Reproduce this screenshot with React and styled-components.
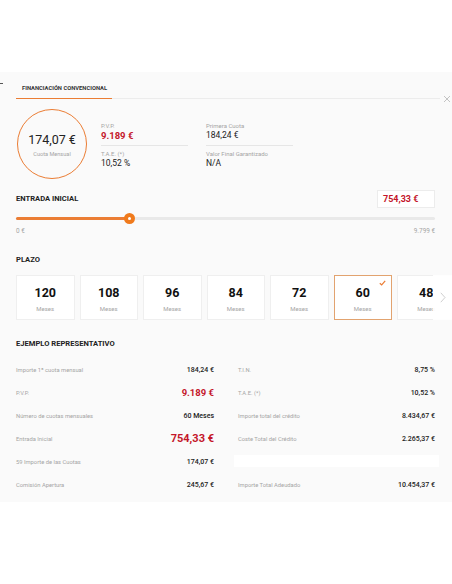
import React from "react";
import styled, { createGlobalStyle } from "styled-components";

const GlobalStyle = createGlobalStyle`
  * { box-sizing: border-box; }
  body {
    margin: 0;
    background: #ffffff;
    font-family: "Roboto", "Liberation Sans", sans-serif;
    color: #222;
  }
`;

const ORANGE = "#eb7d34";
const RED = "#c4162a";
const GREY = "#a5a5a5";

const Page = styled.div`
  width: 452px;
  height: 584px;
  padding-top: 72px;
  position: relative;
`;

const Dash = styled.span`
  position: absolute;
  left: 0;
  top: 83px;
  width: 3px;
  height: 1px;
  background: #555;
`;

const Panel = styled.div`
  background: #fafafa;
  padding: 0 17px 6px 16px;
  overflow: hidden;
`;

const TabBar = styled.div`
  display: flex;
  align-items: flex-end;
  height: 27px;
  border-bottom: 1px solid #ececec;
  margin-right: -5px;
  position: relative;
`;

const Tab = styled.div`
  height: 100%;
  display: flex;
  align-items: center;
  padding: 4px 5px 0 6px;
  font-size: 5.8px;
  font-weight: 700;
  color: #333;
  border-bottom: 1.5px solid ${ORANGE};
  margin-bottom: -1px;
`;

const Close = styled.button`
  position: absolute;
  right: -12px;
  bottom: -6px;
  width: 10px;
  height: 10px;
  padding: 0;
  border: none;
  background: none;
  display: flex;
  align-items: center;
  justify-content: center;
`;

const Summary = styled.div`
  display: flex;
  align-items: flex-start;
  margin-top: 10px;
`;

const Circle = styled.div`
  width: 70px;
  height: 70px;
  margin-left: 1px;
  border-radius: 50%;
  border: 1.8px solid ${ORANGE};
  display: flex;
  flex-direction: column;
  align-items: center;
  justify-content: center;
  flex-shrink: 0;
`;

const CircleValue = styled.div`
  font-size: 12.5px;
  color: #222;
  line-height: 14px;
  margin-top: 2px;
`;

const CircleLabel = styled.div`
  font-size: 5.6px;
  color: ${GREY};
  margin-top: 4px;
`;

const InfoGrid = styled.div`
  display: flex;
  gap: 18px;
  margin-left: 14px;
  padding-top: 13px;
`;

const InfoCol = styled.div`
  width: 87px;
  display: flex;
  flex-direction: column;
`;

const InfoItem = styled.div`
  padding: ${(p) => (p.$first ? "0 0 4px" : "4px 0 0")};
  border-bottom: ${(p) => (p.$first ? "1px solid #e6e6e6" : "none")};
`;

const InfoLabel = styled.div`
  font-size: 6px;
  line-height: 8px;
  color: ${GREY};
`;

const InfoValue = styled.div`
  font-size: ${(p) => (p.$accent ? "9.5px" : "8.5px")};
  font-weight: ${(p) => (p.$accent ? 700 : 400)};
  color: ${(p) => (p.$accent ? RED : "#222")};
  line-height: 11px;
`;

const SectionHead = styled.div`
  display: flex;
  align-items: center;
  justify-content: space-between;
  margin-top: ${(p) => p.$mt || 0}px;
`;

const Title = styled.div`
  font-size: 7.6px;
  font-weight: 700;
  color: #222;
  line-height: 8px;
`;

const AmountBox = styled.div`
  width: 58px;
  height: 18px;
  border: 1px solid #ececec;
  background: #fff;
  padding: 0 5px;
  display: flex;
  align-items: center;
  font-size: 9px;
  font-weight: 700;
  color: ${RED};
`;

const Slider = styled.div`
  position: relative;
  height: 10px;
  margin-top: 5px;
  display: flex;
  align-items: center;
`;

const Track = styled.div`
  width: 100%;
  height: 3px;
  border-radius: 2px;
  background: #e9e9e9;
  position: relative;
`;

const Fill = styled.div`
  position: absolute;
  left: 0;
  top: 0;
  height: 100%;
  border-radius: 2px;
  background: ${ORANGE};
`;

const Thumb = styled.div`
  position: absolute;
  top: 50%;
  width: 11px;
  height: 11px;
  margin: -5.5px 0 0 -5.5px;
  border-radius: 50%;
  background: #f07a1c;
  display: flex;
  align-items: center;
  justify-content: center;

  &::after {
    content: "";
    width: 3px;
    height: 3px;
    border-radius: 50%;
    background: #fff;
  }
`;

const Range = styled.div`
  display: flex;
  justify-content: space-between;
  margin-top: 4px;
  font-size: 6.4px;
  line-height: 8px;
  color: ${GREY};
`;

const Carousel = styled.div`
  position: relative;
  margin: 11px -17px 0 0;
  overflow: hidden;
`;

const Cards = styled.div`
  display: flex;
  gap: 5px;
`;

const Card = styled.div`
  position: relative;
  flex: 0 0 58.5px;
  height: 45px;
  background: #fff;
  border: 1px solid ${(p) => (p.$active ? "#e2a36f" : "#efefef")};
  display: flex;
  flex-direction: column;
  align-items: center;
`;

const CardNum = styled.div`
  font-size: 12.5px;
  font-weight: 700;
  color: #111;
  margin-top: 10px;
  line-height: 14px;
`;

const CardUnit = styled.div`
  font-size: 6px;
  color: ${GREY};
  margin-top: 5px;
`;

const Check = styled.svg`
  position: absolute;
  top: 4px;
  right: 5px;
`;

const Fade = styled.div`
  position: absolute;
  right: 0;
  top: 0;
  bottom: 0;
  width: 19px;
  background: rgba(255, 255, 255, 0.92);
  display: flex;
  align-items: center;
  justify-content: center;
`;

const Table = styled.div`
  display: grid;
  grid-template-columns: 198px 197px;
  column-gap: 24px;
  margin-top: 10px;
`;

const Row = styled.div`
  display: flex;
  align-items: center;
  justify-content: space-between;
  background: ${(p) => (p.$blank ? "#ffffff" : "transparent")};
  margin: ${(p) => (p.$blank ? "5px -4px 6px" : "0")};
  height: ${(p) => (p.$blank ? "12px" : "23px")};
`;

const RowLabel = styled.span`
  font-size: 5.8px;
  color: ${GREY};
`;

const RowValue = styled.span`
  font-size: ${(p) => (p.$size ? p.$size : 7)}px;
  font-weight: ${(p) => (p.$accent ? 700 : 500)};
  color: ${(p) => (p.$accent ? RED : "#222")};
`;

const summary = [
  [
    { label: "P.V.P.", value: "9.189 €", accent: true },
    { label: "T.A.E. (*)", value: "10,52 %" },
  ],
  [
    { label: "Primera Cuota", value: "184,24 €" },
    { label: "Valor Final Garantizado", value: "N/A" },
  ],
];

const plazos = [120, 108, 96, 84, 72, 60, 48];

const rows = [
  ["Importe 1ª cuota mensual", "184,24 €"],
  ["T.I.N.", "8,75 %"],
  ["P.V.P.", "9.189 €", 9.5],
  ["T.A.E. (*)", "10,52 %"],
  ["Número de cuotas mensuales", "60 Meses"],
  ["Importe total del crédito", "8.434,67 €"],
  ["Entrada Inicial", "754,33 €", 11],
  ["Coste Total del Crédito", "2.265,37 €"],
  ["59 Importe de las Cuotas", "174,07 €"],
  null,
  ["Comisión Apertura", "245,67 €"],
  ["Importe Total Adeudado", "10.454,37 €"],
];

export default function App() {
  return (
    <Page>
      <GlobalStyle />
      <Dash />
      <Panel>
        <TabBar>
          <Tab>FINANCIACIÓN CONVENCIONAL</Tab>
          <Close aria-label="Cerrar">
            <svg width="8" height="8" viewBox="0 0 8 8">
              <path d="M1 1L7 7M7 1L1 7" stroke="#b5b5b5" strokeWidth="0.8" />
            </svg>
          </Close>
        </TabBar>

        <Summary>
          <Circle>
            <CircleValue>174,07 €</CircleValue>
            <CircleLabel>Cuota Mensual</CircleLabel>
          </Circle>
          <InfoGrid>
            {summary.map((col, i) => (
              <InfoCol key={i}>
                {col.map((item, j) => (
                  <InfoItem key={item.label} $first={j === 0}>
                    <InfoLabel>{item.label}</InfoLabel>
                    <InfoValue $accent={item.accent}>{item.value}</InfoValue>
                  </InfoItem>
                ))}
              </InfoCol>
            ))}
          </InfoGrid>
        </Summary>

        <SectionHead $mt={11}>
          <Title>ENTRADA INICIAL</Title>
          <AmountBox>754,33 €</AmountBox>
        </SectionHead>
        <Slider>
          <Track>
            <Fill style={{ width: "27%" }} />
            <Thumb style={{ left: "27%" }} />
          </Track>
        </Slider>
        <Range>
          <span>0 €</span>
          <span>9.799 €</span>
        </Range>

        <SectionHead $mt={21}>
          <Title>PLAZO</Title>
        </SectionHead>
        <Carousel>
          <Cards>
            {plazos.map((n) => (
              <Card key={n} $active={n === 60}>
                {n === 60 && (
                  <Check width="7" height="6" viewBox="0 0 7 6">
                    <path d="M0.8 3.2L2.7 5L6.2 0.9" fill="none" stroke={ORANGE} strokeWidth="1.2" />
                  </Check>
                )}
                <CardNum>{n}</CardNum>
                <CardUnit>Meses</CardUnit>
              </Card>
            ))}
          </Cards>
          <Fade>
            <svg width="6" height="11" viewBox="0 0 6 11">
              <path d="M0.8 0.8L5 5.5L0.8 10.2" fill="none" stroke="#c9c9c9" strokeWidth="0.9" />
            </svg>
          </Fade>
        </Carousel>

        <SectionHead $mt={20}>
          <Title>EJEMPLO REPRESENTATIVO</Title>
        </SectionHead>
        <Table>
          {rows.map((r, i) =>
            r ? (
              <Row key={i}>
                <RowLabel>{r[0]}</RowLabel>
                <RowValue $accent={!!r[2]} $size={r[2]}>
                  {r[1]}
                </RowValue>
              </Row>
            ) : (
              <Row key={i} $blank />
            )
          )}
        </Table>
      </Panel>
    </Page>
  );
}
